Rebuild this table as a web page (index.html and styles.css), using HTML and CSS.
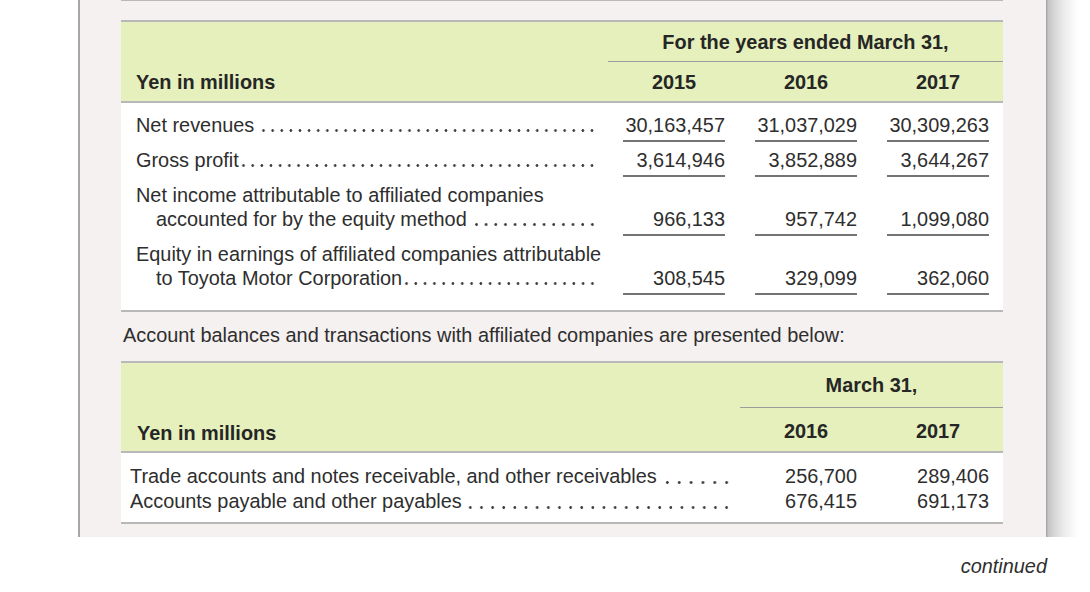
FILE: index.html
```html
<!DOCTYPE html>
<html lang="en">
<head>
<meta charset="utf-8">
<title>Affiliated companies</title>
<link rel="stylesheet" href="styles.css">
</head>
<body>
<div class="wrap">
  <div class="panel">
    <div class="top-rule"></div>

    <section class="tbl">
      <div class="thead">
        <div class="th-label th-label-1">Yen in millions</div>
        <div class="th-group">
          <div class="th-title th-title-1">For the years ended March 31,</div>
          <div class="th-years th-years-1"><span>2015</span><span>2016</span><span>2017</span></div>
        </div>
      </div>
      <div class="tbody tbody-1">
        <div class="row row-1">
          <div class="label"><div class="line"><span>Net revenues</span><span class="dots gap"></span></div></div>
          <div class="num">30,163,457</div>
          <div class="num">31,037,029</div>
          <div class="num">30,309,263</div>
        </div>
        <div class="row row-2">
          <div class="label"><div class="line"><span>Gross profit</span><span class="dots"></span></div></div>
          <div class="num">3,614,946</div>
          <div class="num">3,852,889</div>
          <div class="num">3,644,267</div>
        </div>
        <div class="row row-3">
          <div class="label">
            <div class="line">Net income attributable to affiliated companies</div>
            <div class="line indent"><span>accounted for by the equity method</span><span class="dots gap"></span></div>
          </div>
          <div class="num">966,133</div>
          <div class="num">957,742</div>
          <div class="num">1,099,080</div>
        </div>
        <div class="row row-4">
          <div class="label">
            <div class="line">Equity in earnings of affiliated companies attributable</div>
            <div class="line indent"><span>to Toyota Motor Corporation</span><span class="dots"></span></div>
          </div>
          <div class="num">308,545</div>
          <div class="num">329,099</div>
          <div class="num">362,060</div>
        </div>
      </div>
    </section>

    <p class="note">Account balances and transactions with affiliated companies are presented below:</p>

    <section class="tbl">
      <div class="thead">
        <div class="th-label th-label-2">Yen in millions</div>
        <div class="th-group">
          <div class="th-title th-title-2">March 31,</div>
          <div class="th-years th-years-2"><span>2016</span><span>2017</span></div>
        </div>
      </div>
      <div class="tbody tbody-2">
        <div class="row2">
          <div class="label2"><div class="line"><span>Trade accounts and notes receivable, and other receivables</span><span class="dots dots2 gap"></span></div></div>
          <div class="num2">256,700</div>
          <div class="num2">289,406</div>
        </div>
        <div class="row2">
          <div class="label2"><div class="line"><span>Accounts payable and other payables</span><span class="dots dots2 gap-sm"></span></div></div>
          <div class="num2">676,415</div>
          <div class="num2">691,173</div>
        </div>
      </div>
    </section>
  </div>
  <div class="shadow"></div>
</div>
<p class="continued">continued</p>
</body>
</html>
```

FILE: styles.css
```css
* { box-sizing: border-box; }

html, body {
  margin: 0;
  padding: 0;
  background: #ffffff;
}

body {
  font-family: "Liberation Sans", Arial, Helvetica, sans-serif;
  font-size: 19.9px;
  line-height: 24px;
  color: #2e2e2e;
}

.wrap {
  display: flex;
  align-items: stretch;
}

.panel {
  margin-left: 78px;
  width: 968px;
  background: #f5f1f0;
  border-left: 2px solid #a6a6a6;
  padding: 0 43px 13px 41px;
}

.shadow {
  width: 32px;
  background: linear-gradient(to right, #9c9c9c 0, #c4c4c4 2px, #d6d6d6 8px, #ececec 18px, #ffffff 32px);
}

.top-rule {
  border-top: 1px solid #b9b9b9;
  margin-bottom: 19px;
}

/* ---------- table shell ---------- */
.thead {
  display: flex;
  background: #e5f0bc;
  border-top: 2px solid #b8b8b8;
  border-bottom: 2px solid #b8b8b8;
  font-weight: bold;
  color: #262626;
}

.th-label {
  align-self: flex-end;
  padding-left: 15px;
}
.th-label-1 { flex: 0 0 487px; padding-bottom: 7px; }
.th-label-2 { flex: 0 0 619px; padding-bottom: 6px; padding-left: 16px; }

.th-group { flex: 1; }

.th-title {
  text-align: center;
  border-bottom: 1px solid #9d9d9d;
}
.th-title-1 { padding: 8px 0 7px; }
.th-title-2 { padding: 10px 0 10px; }

.th-years {
  display: grid;
  column-gap: 30px;
  padding: 0 14px 0 15px;
  text-align: center;
}
.th-years-1 { grid-template-columns: repeat(3, 102px); padding-top: 8px; padding-bottom: 7px; }
.th-years-2 { grid-template-columns: repeat(2, 102px); padding-top: 11px; padding-bottom: 8px; }

.tbody {
  background: #ffffff;
  border-bottom: 2px solid #b8b8b8;
}
.tbody-1 { padding: 10px 14px 15px 15px; }
.tbody-2 { padding: 11px 14px 8px 9px; }

/* ---------- table 1 rows ---------- */
.row {
  display: grid;
  grid-template-columns: minmax(0, 1fr) 102px 102px 102px;
  column-gap: 30px;
  align-items: end;
}
.row-2, .row-3 { margin-top: 6px; }
.row-4 { margin-top: 6px; }

.label {
  margin-right: -4px;
  padding-bottom: 5px;
}

.line {
  display: flex;
  white-space: nowrap;
}
.indent { padding-left: 20px; }

.dots {
  flex: 1;
  min-width: 0;
  height: 24px;
  background-image: radial-gradient(circle at center, #3a3a3a 0, #3a3a3a 1px, rgba(58, 58, 58, 0) 1.7px);
  background-size: 9px 3px;
  background-repeat: space no-repeat;
  background-position: right 0 bottom 5px;
}
.dots.gap { margin-left: 5px; }
.dots.gap-sm { margin-left: 3px; }
.dots2 { background-size: 10.7px 3px; }

.num {
  text-align: right;
  padding-bottom: 3px;
  border-bottom: 2px solid #747474;
}

/* ---------- table 2 rows ---------- */
.row2 {
  display: grid;
  grid-template-columns: minmax(0, 1fr) 102px 102px;
  column-gap: 30px;
  line-height: 25px;
}
.label2 { margin-right: -7px; }
.row2 .dots { height: 25px; }
.num2 { text-align: right; }

/* ---------- notes ---------- */
.note {
  margin: 0;
  padding: 11px 0 14px 2px;
}

.continued {
  margin: 17px 0 0;
  padding-right: 43px;
  text-align: right;
  font-style: italic;
}
```
